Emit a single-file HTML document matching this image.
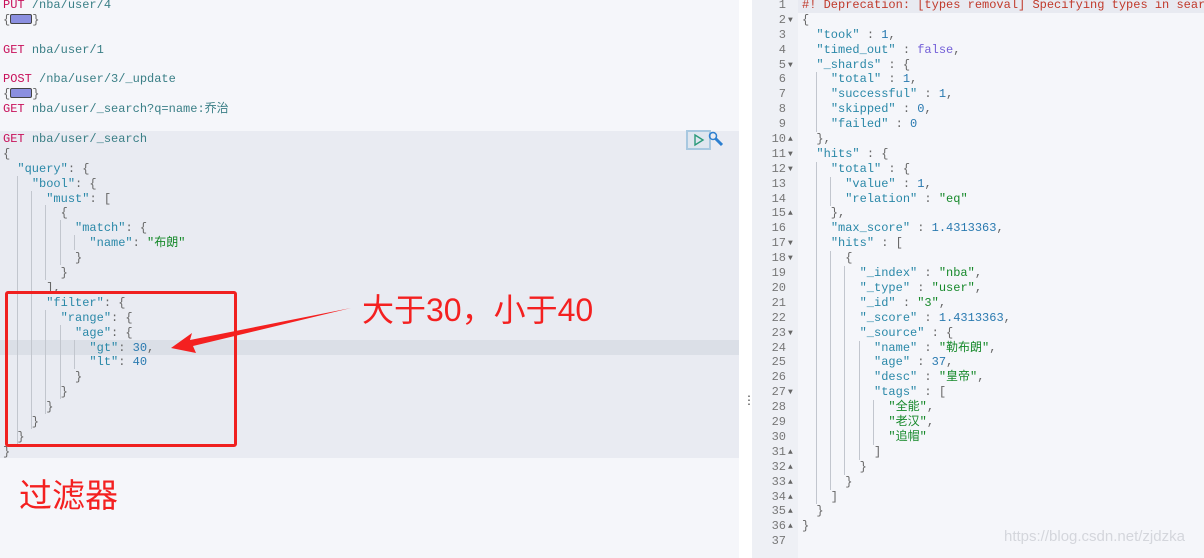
<!DOCTYPE html>
<html><head><meta charset="utf-8"><style>
*{margin:0;padding:0;box-sizing:border-box}
body{width:1204px;height:558px;background:#fff;position:relative;overflow:hidden;font-family:"Liberation Mono","Noto Sans CJK SC",monospace;font-size:12px}
.l{position:absolute;left:3px;height:15px;line-height:15px;white-space:pre;margin-top:1px}
.r{position:absolute;left:802px;height:15px;line-height:15px;white-space:pre;margin-top:1px}
.n{position:absolute;left:752px;width:34px;text-align:right;height:15px;line-height:15px;color:#777;margin-top:1px}
.n i{font-style:normal;position:absolute;left:36px;font-size:8px;color:#666}
.m{color:#c8105a}.p{color:#3a7f86}.k{color:#2a88a8}.s{color:#16892a}.num{color:#2a7ab0}.c{color:#666}.f{color:#7460d8}.d{color:#c0392b}
.g{position:absolute;width:1px;background:#c2c6ce}
.ph{display:inline-block;width:22px;height:10px;background:#8b8fe0;border:1px solid #444;border-radius:2px;vertical-align:-1px}
</style></head><body>
<div style="position:absolute;left:0;top:0;width:739px;height:558px;background:#f5f6fa"></div>
<div style="position:absolute;left:0;top:131px;width:739px;height:327px;background:#e9ebf2"></div>
<div style="position:absolute;left:0;top:340px;width:739px;height:15px;background:#dbdfe7"></div>
<div style="position:absolute;left:739px;top:0;width:13px;height:558px;background:#fff"></div>
<div style="position:absolute;left:743px;top:393px;color:#444;font-size:12px">⋮</div>
<div style="position:absolute;left:752px;top:0;width:46px;height:558px;background:#eef0f5"></div>
<div style="position:absolute;left:798px;top:0;width:406px;height:558px;background:#f5f6fa"></div>
<div style="position:absolute;left:798px;top:-2px;width:406px;height:15px;background:#e8eaf1"></div>

<div class="l" style="top:-3px"><span class="m">PUT</span> <span class="p">/nba/user/4</span></div>
<div class="l c" style="top:12px">{<span class="ph"></span>}</div>
<div class="l" style="top:42px"><span class="m">GET</span> <span class="p">nba/user/1</span></div>
<div class="l" style="top:71px"><span class="m">POST</span> <span class="p">/nba/user/3/_update</span></div>
<div class="l c" style="top:86px">{<span class="ph"></span>}</div>
<div class="l" style="top:101px"><span class="m">GET</span> <span class="p">nba/user/_search?q=name:乔治</span></div>
<div class="l" style="top:131px"><span class="m">GET</span> <span class="p">nba/user/_search</span></div>
<div class="l c" style="top:146px">{</div>
<div class="l c" style="top:161px">  <span class="k">"query"</span>: {</div>
<div class="l c" style="top:176px">    <span class="k">"bool"</span>: {</div>
<div class="l c" style="top:191px">      <span class="k">"must"</span>: [</div>
<div class="l c" style="top:205px">        {</div>
<div class="l c" style="top:220px">          <span class="k">"match"</span>: {</div>
<div class="l c" style="top:235px">            <span class="k">"name"</span>: <span class="s">"布朗"</span></div>
<div class="l c" style="top:250px">          }</div>
<div class="l c" style="top:265px">        }</div>
<div class="l c" style="top:280px">      ],</div>
<div class="l c" style="top:295px">      <span class="k">"filter"</span>: {</div>
<div class="l c" style="top:310px">        <span class="k">"range"</span>: {</div>
<div class="l c" style="top:325px">          <span class="k">"age"</span>: {</div>
<div class="l c" style="top:340px">            <span class="k">"gt"</span>: <span class="num">30</span>,</div>
<div class="l c" style="top:354px">            <span class="k">"lt"</span>: <span class="num">40</span></div>
<div class="l c" style="top:369px">          }</div>
<div class="l c" style="top:384px">        }</div>
<div class="l c" style="top:399px">      }</div>
<div class="l c" style="top:414px">    }</div>
<div class="l c" style="top:429px">  }</div>
<div class="l c" style="top:444px">}</div>
<div class="g" style="left:17px;top:176px;height:268px"></div>
<div class="g" style="left:31px;top:191px;height:238px"></div>
<div class="g" style="left:45px;top:205px;height:75px"></div>
<div class="g" style="left:45px;top:310px;height:104px"></div>
<div class="g" style="left:60px;top:220px;height:45px"></div>
<div class="g" style="left:60px;top:325px;height:74px"></div>
<div class="g" style="left:74px;top:235px;height:15px"></div>
<div class="g" style="left:74px;top:340px;height:29px"></div>

<div style="position:absolute;left:686px;top:130px;width:25px;height:20px;border:2px solid #a8c8e0;background:#dfe6ef"></div>
<svg style="position:absolute;left:692px;top:133px" width="14" height="14"><path d="M3 2 L11 7 L3 12 Z" fill="none" stroke="#2a9a7a" stroke-width="1.4"/></svg>
<svg style="position:absolute;left:708px;top:131px" width="17" height="17"><circle cx="5" cy="5" r="3.5" fill="none" stroke="#2d7fd0" stroke-width="1.5"/><path d="M7.5 7.5 L14 14" stroke="#2d7fd0" stroke-width="3"/></svg>

<div style="position:absolute;left:5px;top:291px;width:232px;height:156px;border:3px solid #f02020;border-radius:3px"></div>
<svg style="position:absolute;left:0;top:0" width="739" height="558"><path d="M351 308 L190 340 L192 333 L171 348 L196 353 L193 346 Z" fill="#f42020"/></svg>
<div style="position:absolute;left:362px;top:285px;font-family:'Liberation Sans','Noto Sans CJK SC',sans-serif;font-size:32px;color:#f42020;white-space:nowrap">大于30，小于40</div>
<div style="position:absolute;left:19px;top:469px;font-family:'Liberation Sans','Noto Sans CJK SC',sans-serif;font-size:33px;color:#f42020;white-space:nowrap">过滤器</div>

<div class="n" style="top:-3px">1</div>
<div class="n" style="top:12px">2<i>▼</i></div>
<div class="n" style="top:27px">3</div>
<div class="n" style="top:42px">4</div>
<div class="n" style="top:57px">5<i>▼</i></div>
<div class="n" style="top:71px">6</div>
<div class="n" style="top:86px">7</div>
<div class="n" style="top:101px">8</div>
<div class="n" style="top:116px">9</div>
<div class="n" style="top:131px">10<i>▲</i></div>
<div class="n" style="top:146px">11<i>▼</i></div>
<div class="n" style="top:161px">12<i>▼</i></div>
<div class="n" style="top:176px">13</div>
<div class="n" style="top:191px">14</div>
<div class="n" style="top:205px">15<i>▲</i></div>
<div class="n" style="top:220px">16</div>
<div class="n" style="top:235px">17<i>▼</i></div>
<div class="n" style="top:250px">18<i>▼</i></div>
<div class="n" style="top:265px">19</div>
<div class="n" style="top:280px">20</div>
<div class="n" style="top:295px">21</div>
<div class="n" style="top:310px">22</div>
<div class="n" style="top:325px">23<i>▼</i></div>
<div class="n" style="top:340px">24</div>
<div class="n" style="top:354px">25</div>
<div class="n" style="top:369px">26</div>
<div class="n" style="top:384px">27<i>▼</i></div>
<div class="n" style="top:399px">28</div>
<div class="n" style="top:414px">29</div>
<div class="n" style="top:429px">30</div>
<div class="n" style="top:444px">31<i>▲</i></div>
<div class="n" style="top:459px">32<i>▲</i></div>
<div class="n" style="top:474px">33<i>▲</i></div>
<div class="n" style="top:489px">34<i>▲</i></div>
<div class="n" style="top:503px">35<i>▲</i></div>
<div class="n" style="top:518px">36<i>▲</i></div>
<div class="n" style="top:533px">37</div>

<div class="r d" style="top:-3px">#! Deprecation: [types removal] Specifying types in search</div>
<div class="r c" style="top:12px">{</div>
<div class="r c" style="top:27px">  <span class="k">"took"</span> : <span class="num">1</span>,</div>
<div class="r c" style="top:42px">  <span class="k">"timed_out"</span> : <span class="f">false</span>,</div>
<div class="r c" style="top:57px">  <span class="k">"_shards"</span> : {</div>
<div class="r c" style="top:71px">    <span class="k">"total"</span> : <span class="num">1</span>,</div>
<div class="r c" style="top:86px">    <span class="k">"successful"</span> : <span class="num">1</span>,</div>
<div class="r c" style="top:101px">    <span class="k">"skipped"</span> : <span class="num">0</span>,</div>
<div class="r c" style="top:116px">    <span class="k">"failed"</span> : <span class="num">0</span></div>
<div class="r c" style="top:131px">  },</div>
<div class="r c" style="top:146px">  <span class="k">"hits"</span> : {</div>
<div class="r c" style="top:161px">    <span class="k">"total"</span> : {</div>
<div class="r c" style="top:176px">      <span class="k">"value"</span> : <span class="num">1</span>,</div>
<div class="r c" style="top:191px">      <span class="k">"relation"</span> : <span class="s">"eq"</span></div>
<div class="r c" style="top:205px">    },</div>
<div class="r c" style="top:220px">    <span class="k">"max_score"</span> : <span class="num">1.4313363</span>,</div>
<div class="r c" style="top:235px">    <span class="k">"hits"</span> : [</div>
<div class="r c" style="top:250px">      {</div>
<div class="r c" style="top:265px">        <span class="k">"_index"</span> : <span class="s">"nba"</span>,</div>
<div class="r c" style="top:280px">        <span class="k">"_type"</span> : <span class="s">"user"</span>,</div>
<div class="r c" style="top:295px">        <span class="k">"_id"</span> : <span class="s">"3"</span>,</div>
<div class="r c" style="top:310px">        <span class="k">"_score"</span> : <span class="num">1.4313363</span>,</div>
<div class="r c" style="top:325px">        <span class="k">"_source"</span> : {</div>
<div class="r c" style="top:340px">          <span class="k">"name"</span> : <span class="s">"勒布朗"</span>,</div>
<div class="r c" style="top:354px">          <span class="k">"age"</span> : <span class="num">37</span>,</div>
<div class="r c" style="top:369px">          <span class="k">"desc"</span> : <span class="s">"皇帝"</span>,</div>
<div class="r c" style="top:384px">          <span class="k">"tags"</span> : [</div>
<div class="r c" style="top:399px">            <span class="s">"全能"</span>,</div>
<div class="r c" style="top:414px">            <span class="s">"老汉"</span>,</div>
<div class="r c" style="top:429px">            <span class="s">"追帽"</span></div>
<div class="r c" style="top:444px">          ]</div>
<div class="r c" style="top:459px">        }</div>
<div class="r c" style="top:474px">      }</div>
<div class="r c" style="top:489px">    ]</div>
<div class="r c" style="top:503px">  }</div>
<div class="r c" style="top:518px">}</div>
<div class="g" style="left:816px;top:72px;height:60px"></div>
<div class="g" style="left:816px;top:162px;height:342px"></div>
<div class="g" style="left:830px;top:177px;height:29px"></div>
<div class="g" style="left:830px;top:251px;height:239px"></div>
<div class="g" style="left:844px;top:266px;height:209px"></div>
<div class="g" style="left:859px;top:341px;height:119px"></div>
<div class="g" style="left:873px;top:400px;height:45px"></div>
<div style="position:absolute;left:1004px;top:528px;font-family:'Liberation Sans',sans-serif;font-size:15px;color:#d4d6dc;white-space:nowrap">https://blog.csdn.net/zjdzka</div>
</body></html>
